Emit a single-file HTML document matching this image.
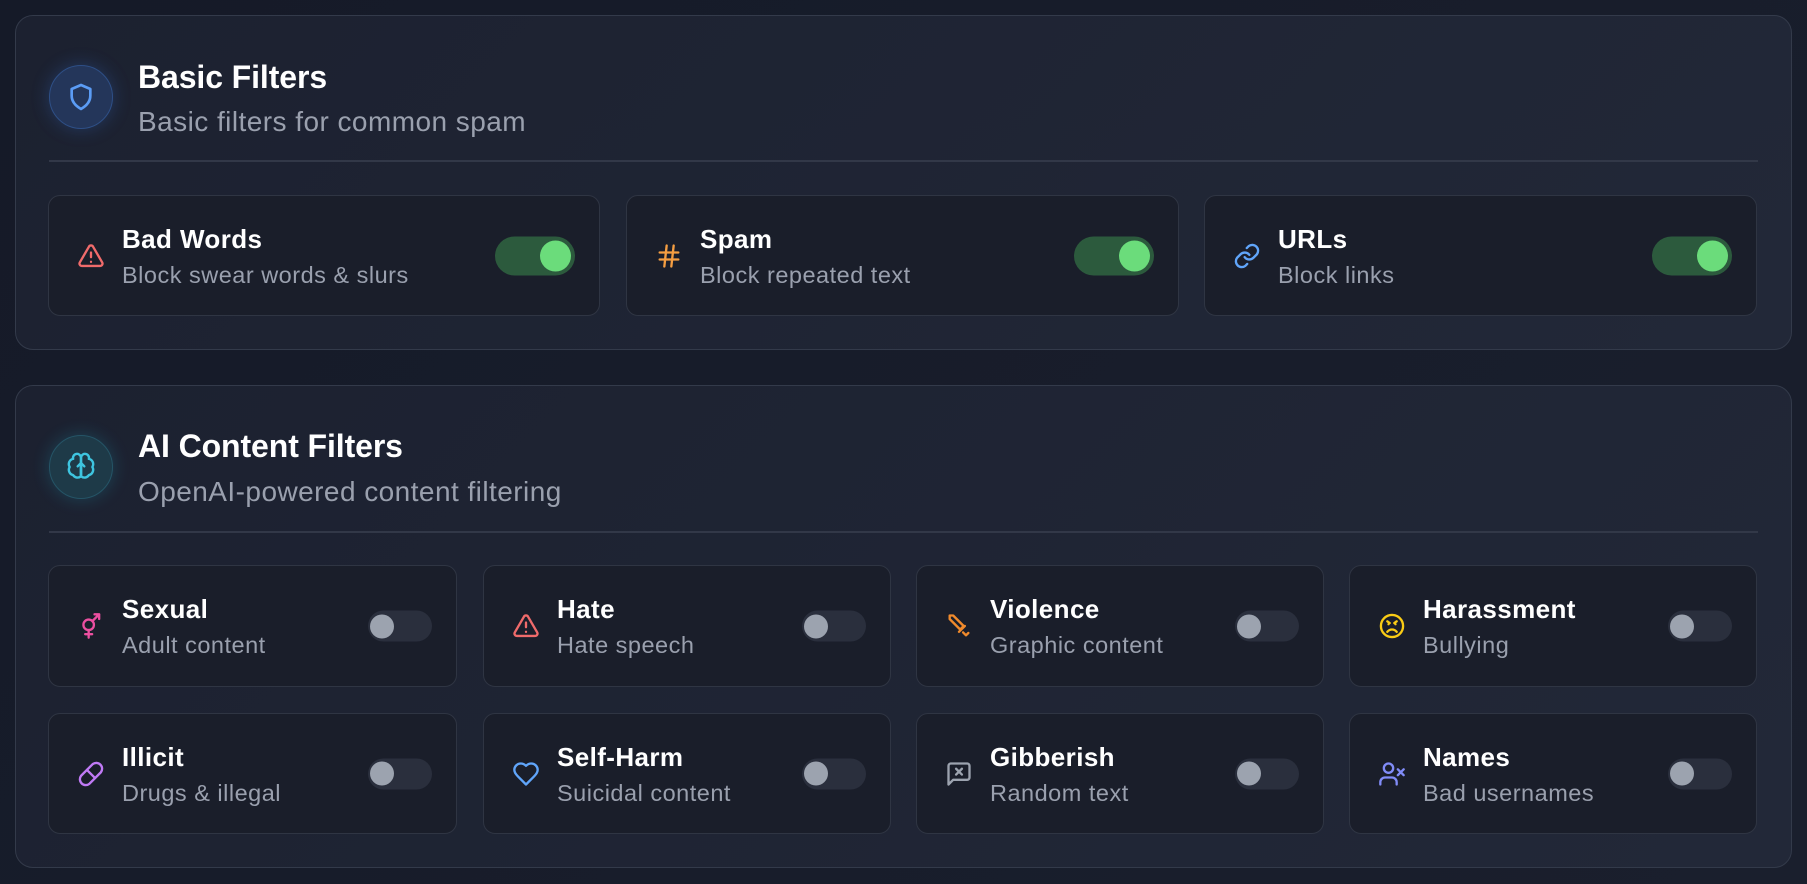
<!DOCTYPE html>
<html><head><meta charset="utf-8"><style>
*{box-sizing:border-box;margin:0;padding:0}
body{width:1807px;height:884px;background:linear-gradient(135deg,#151a28,#1a1f2d);font-family:"Liberation Sans",sans-serif;overflow:hidden;position:relative}
.panel{position:absolute;left:15px;width:1777px;border:1.5px solid #333a4a;border-radius:18px;background:linear-gradient(135deg,#1c2130,#222838)}
.hicon{position:absolute;left:48px;width:64px;height:64px;border-radius:50%;display:flex;align-items:center;justify-content:center}
.title{position:absolute;left:122px;font-size:32px;font-weight:bold;color:#fff;letter-spacing:-0.1px}
.sub{position:absolute;left:122px;font-size:28px;color:#9aa0ae;letter-spacing:0.45px}
.div{position:absolute;left:33px;right:33px;height:2px;background:#323848}
.card{position:absolute;border:1.5px solid #2f3543;border-radius:12px;background:#1a1e2a}
.card svg.ic{position:absolute;left:28px;top:50%;transform:translateY(-50%);width:28px;height:28px;fill:none;stroke-width:2;stroke-linecap:round;stroke-linejoin:round}
.ct{position:absolute;left:73px;top:28px;font-size:26px;font-weight:bold;color:#fff;letter-spacing:0.4px}
.cs{position:absolute;left:73px;top:66px;font-size:23.5px;color:#9aa0ae;letter-spacing:0.5px}
.tg{position:absolute;top:50%;transform:translateY(-50%);border-radius:20px}
.on{right:24px;width:80px;height:39px;background:#2c5a3d}
.on::after{content:"";position:absolute;right:4px;top:4px;width:31px;height:31px;border-radius:50%;background:#6bdc7b}
.off{right:24px;width:64px;height:31px;background:#2a2f3d}
.off::after{content:"";position:absolute;left:2px;top:3.5px;width:24px;height:24px;border-radius:50%;background:#9ca3af}
</style></head><body>

<div class="panel" style="top:15px;height:335px">
  <div class="hicon" style="top:49px;left:33px;background:#24365a;border:1.5px solid #2e4f86;box-shadow:0 0 18px rgba(59,130,246,.25)">
    <svg width="32" height="32" viewBox="0 0 24 24" fill="none" stroke="#5b9cf5" stroke-width="2" stroke-linejoin="round"><path d="M12 3l7 3v5c0 5-3.5 8-7 10-3.5-2-7-5-7-10V6z"/></svg>
  </div>
  <div class="title" style="left:122px;top:43px">Basic Filters</div>
  <div class="sub" style="left:122px;top:90px">Basic filters for common spam</div>
  <div class="div" style="top:144px"></div>
</div>

<div class="card" style="left:48px;top:195px;width:552px;height:121px">
  <svg class="ic" viewBox="0 0 24 24" stroke="#f06b6b"><path d="M10.3 3.9L2.4 17.5A2 2 0 0 0 4.1 20.5h15.8a2 2 0 0 0 1.7-3L13.7 3.9a2 2 0 0 0-3.4 0z"/><path d="M12 9v4M12 17h.01"/></svg>
  <div class="ct">Bad Words</div><div class="cs">Block swear words &amp; slurs</div><div class="tg on"></div>
</div>
<div class="card" style="left:626px;top:195px;width:553px;height:121px">
  <svg class="ic" viewBox="0 0 24 24" stroke="#f59e42"><path d="M4 9h16M4 15h16M10 3L8 21M16 3l-2 18"/></svg>
  <div class="ct">Spam</div><div class="cs">Block repeated text</div><div class="tg on"></div>
</div>
<div class="card" style="left:1204px;top:195px;width:553px;height:121px">
  <svg class="ic" viewBox="0 0 24 24" stroke="#60a5fa"><path d="M10 13a5 5 0 0 0 7.5.5l3-3a5 5 0 0 0-7-7l-1.7 1.7"/><path d="M14 11a5 5 0 0 0-7.5-.5l-3 3a5 5 0 0 0 7 7l1.7-1.7"/></svg>
  <div class="ct">URLs</div><div class="cs">Block links</div><div class="tg on"></div>
</div>

<div class="panel" style="top:385px;height:483px">
  <div class="hicon" style="top:49px;left:33px;background:#1e3a48;border:1.5px solid #255466;box-shadow:0 0 18px rgba(34,211,238,.2)">
    <svg width="32" height="32" viewBox="0 0 24 24" fill="none" stroke="#3ec5e0" stroke-width="1.8" stroke-linejoin="round" stroke-linecap="round"><path d="M12 5a3 3 0 1 0-5.9.9A4 4 0 0 0 3.5 12a4 4 0 0 0 2.5 6A4 4 0 0 0 12 19z"/><path d="M12 5a3 3 0 1 1 5.9.9A4 4 0 0 1 20.5 12a4 4 0 0 1-2.5 6A4 4 0 0 1 12 19z"/><path d="M12 19V9M9.5 11.5L12 9l2.5 2.5"/></svg>
  </div>
  <div class="title" style="top:42px">AI Content Filters</div>
  <div class="sub" style="top:90px">OpenAI-powered content filtering</div>
  <div class="div" style="top:145px"></div>
</div>

<div class="card" style="left:48px;top:565px;width:409px;height:122px">
  <svg class="ic" viewBox="0 0 24 24" stroke="#ec4fa0"><circle cx="10" cy="11" r="4.5"/><path d="M10 15.5V22M7 19h6M13.5 7.5L19 2M15 2h4v4"/></svg>
  <div class="ct">Sexual</div><div class="cs">Adult content</div><div class="tg off"></div>
</div>
<div class="card" style="left:483px;top:565px;width:408px;height:122px">
  <svg class="ic" viewBox="0 0 24 24" stroke="#f06b6b"><path d="M10.3 3.9L2.4 17.5A2 2 0 0 0 4.1 20.5h15.8a2 2 0 0 0 1.7-3L13.7 3.9a2 2 0 0 0-3.4 0z"/><path d="M12 9v4M12 17h.01"/></svg>
  <div class="ct">Hate</div><div class="cs">Hate speech</div><div class="tg off"></div>
</div>
<div class="card" style="left:916px;top:565px;width:408px;height:122px">
  <svg class="ic" viewBox="0 0 24 24" stroke="#f08a2c"><path d="M4 3h3l9 9-3 3L4 6z"/><path d="M12 17l5-5M15.5 17.5l2.5 2.5M18 20l2-2"/></svg>
  <div class="ct">Violence</div><div class="cs">Graphic content</div><div class="tg off"></div>
</div>
<div class="card" style="left:1349px;top:565px;width:408px;height:122px">
  <svg class="ic" viewBox="0 0 24 24" stroke="#facc15"><circle cx="12" cy="12" r="9.5"/><path d="M8 17a5 5 0 0 1 8 0M8 8l2 1.5M16 8l-2 1.5M9 10.5h.01M15 10.5h.01"/></svg>
  <div class="ct">Harassment</div><div class="cs">Bullying</div><div class="tg off"></div>
</div>

<div class="card" style="left:48px;top:713px;width:409px;height:121px">
  <svg class="ic" viewBox="0 0 24 24" stroke="#c07af5"><path d="M10.5 20.5a5 5 0 0 1-7-7l10-10a5 5 0 0 1 7 7z"/><path d="M8.5 8.5l7 7"/></svg>
  <div class="ct">Illicit</div><div class="cs">Drugs &amp; illegal</div><div class="tg off"></div>
</div>
<div class="card" style="left:483px;top:713px;width:408px;height:121px">
  <svg class="ic" viewBox="0 0 24 24" stroke="#60a5fa"><path d="M19 14c1.5-1.5 3-3.2 3-5.5A5.5 5.5 0 0 0 16.5 3c-1.8 0-3 .5-4.5 2-1.5-1.5-2.7-2-4.5-2A5.5 5.5 0 0 0 2 8.5c0 2.3 1.5 4 3 5.5l7 7z"/></svg>
  <div class="ct">Self-Harm</div><div class="cs">Suicidal content</div><div class="tg off"></div>
</div>
<div class="card" style="left:916px;top:713px;width:408px;height:121px">
  <svg class="ic" viewBox="0 0 24 24" stroke="#9ca3af"><path d="M21 15a2 2 0 0 1-2 2H7l-4 4V5a2 2 0 0 1 2-2h14a2 2 0 0 1 2 2z"/><path d="M14.5 7.5l-5 5M9.5 7.5l5 5"/></svg>
  <div class="ct">Gibberish</div><div class="cs">Random text</div><div class="tg off"></div>
</div>
<div class="card" style="left:1349px;top:713px;width:408px;height:121px">
  <svg class="ic" viewBox="0 0 24 24" stroke="#818cf8"><path d="M16 21v-2a4 4 0 0 0-4-4H6a4 4 0 0 0-4 4v2"/><circle cx="9" cy="7" r="4"/><path d="M17 8l5 5M22 8l-5 5"/></svg>
  <div class="ct">Names</div><div class="cs">Bad usernames</div><div class="tg off"></div>
</div>

</body></html>
